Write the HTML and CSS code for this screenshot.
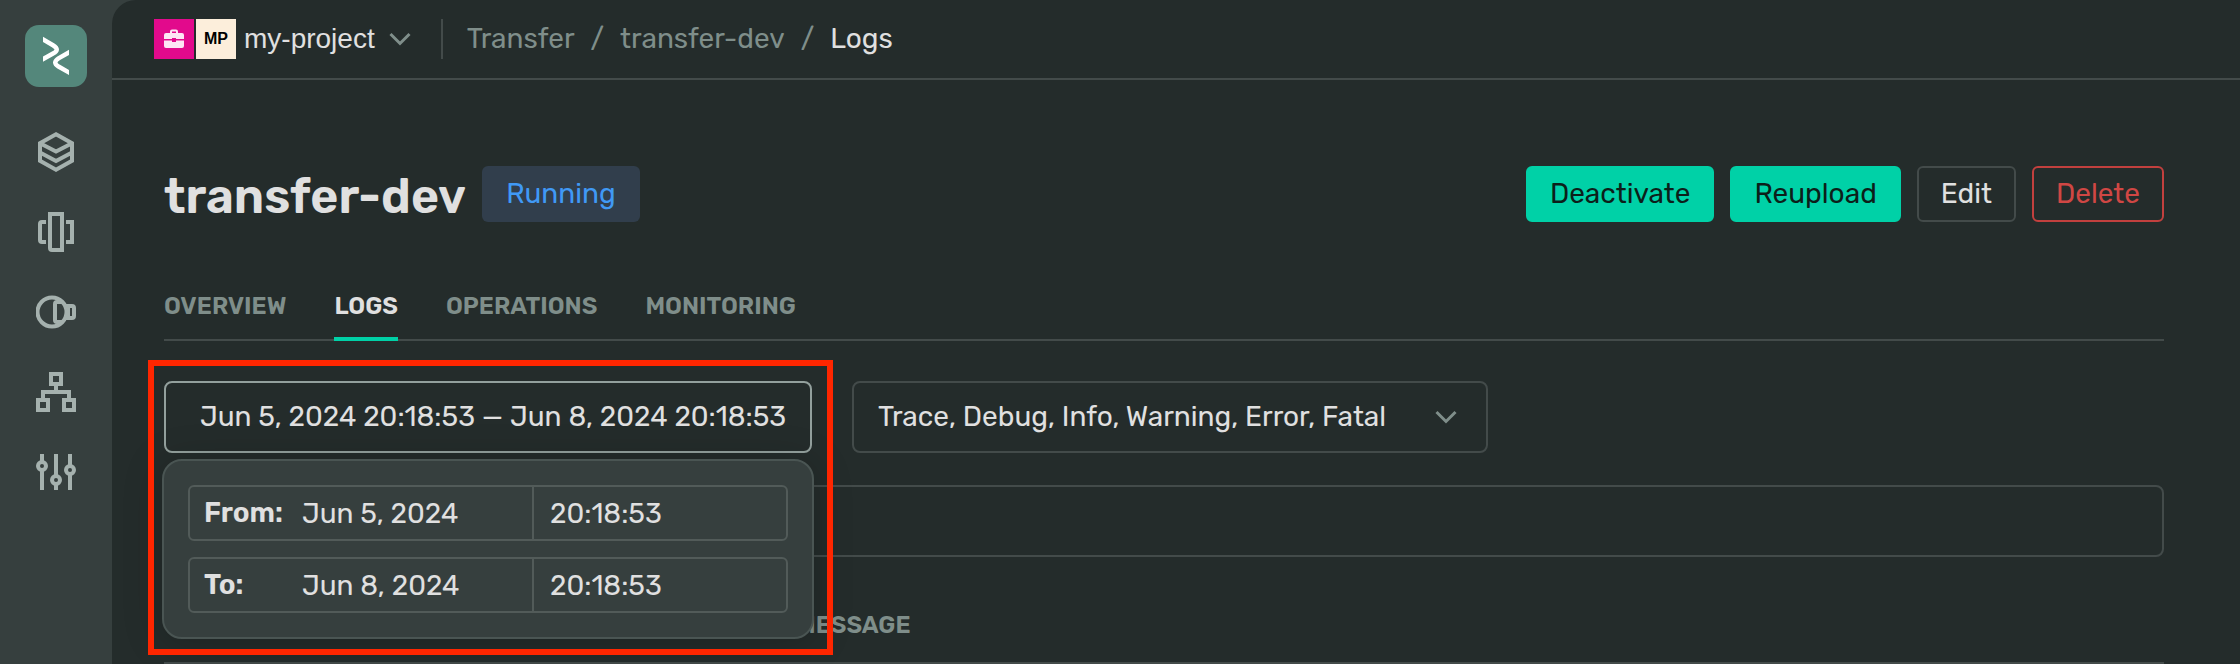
FILE: index.html
```html
<!DOCTYPE html>
<html lang="en">
<head>
<meta charset="utf-8">
<title>transfer-dev – Logs</title>
<link rel="stylesheet" href="styles.css">
</head>
<body>
<div class="app">
  <nav class="sidebar" aria-label="Services">
    <a class="logo" href="#" aria-label="Home">
      <svg width="62" height="62" viewBox="25 25 62 62" fill="none" stroke="#fff" stroke-width="4.500"><clipPath id="mark"><path d="M43 30H69V82H43Z"/></clipPath><path clip-path="url(#mark)" d="M41 38.300L53 45.200Q60.500 49.700 53 53.600L41 60.200M71 51.200L58.500 58.300Q52 62.500 58.500 66.500L71 73.600"/></svg>
    </a>
    <a class="side-link" href="#" aria-label="Clusters">
      <svg width="40" height="40" viewBox="36 132 40 40"><path d="M56 134.300L72 143.200V160.800L56 169.700L40 160.800V143.200ZM40 143.200L56 151.500L72 143.200M40 152.500L56 161L72 152.500"/></svg>
    </a>
    <a class="side-link" href="#" aria-label="Transfer">
      <svg width="40" height="40" viewBox="36 212 40 40"><path d="M50 214H62V250H52Q50 250 50 248ZM46 222H42Q40 222 40 224V240Q40 242 42 242H46M66 222H72V242H66"/></svg>
    </a>
    <a class="side-link" href="#" aria-label="Visualization">
      <svg width="40" height="40" viewBox="36 292 40 40"><circle cx="52" cy="312" r="14.500"/><path d="M62 302H57Q55 302 55 304V320Q55 322 57 322H62M66 306H72Q74 306 74 308V316Q74 318 72 318H66M68 306V318"/></svg>
    </a>
    <a class="side-link" href="#" aria-label="Network">
      <svg width="40" height="40" viewBox="36 372 40 40"><path d="M51 374H61V384H51ZM38 400H48V410H38ZM64 400H74V410H64ZM56 386V392M43 398V392H69V398"/></svg>
    </a>
    <a class="side-link" href="#" aria-label="Settings">
      <svg width="40" height="40" viewBox="36 452 40 40"><path d="M42 454V462M42 470V490M56 454V476M56 484V490M70 454V466M70 474V490"/><circle cx="42" cy="466" r="4"/><circle cx="56" cy="480" r="4"/><circle cx="70" cy="470" r="4"/></svg>
    </a>
  </nav>

  <div class="page">
    <header class="topbar">
      <button class="project" type="button">
        <span class="tile tile-org">
          <svg width="20" height="20" viewBox="0 0 20 20" fill="#fde6f4"><path d="M6 4V2.500Q6 0.500 8 .5H12Q14 .5 14 2.500V4H18Q20 4 20 6V10H12V9H8V10H0V6Q0 4 2 4ZM8 4H12V2.500H8ZM0 11.500H8V13H12V11.500H20V17Q20 19 18 19H2Q0 19 0 17Z"/></svg>
        </span>
        <span class="tile tile-project">MP</span>
        <span class="project-name">my-project</span>
        <svg class="chevron" width="22" height="14" viewBox="0 0 22 14"><path d="M1.500 2L11 11.500L20.500 2"/></svg>
      </button>
      <nav class="crumbs" aria-label="Breadcrumb">
        <a href="#">Transfer</a><span>/</span><a href="#">transfer-dev</a><span>/</span><b>Logs</b>
      </nav>
    </header>

    <main class="content">
      <div class="title-row">
        <h1>transfer-dev</h1>
        <span class="status">Running</span>
        <div class="actions">
          <button class="btn primary" type="button">Deactivate</button>
          <button class="btn primary" type="button">Reupload</button>
          <button class="btn" type="button">Edit</button>
          <button class="btn danger" type="button">Delete</button>
        </div>
      </div>

      <nav class="tabs" aria-label="Sections">
        <a href="#">Overview</a>
        <a class="active" href="#" aria-current="page">Logs</a>
        <a href="#">Operations</a>
        <a href="#">Monitoring</a>
      </nav>

      <div class="filters">
        <div class="range">
          <button class="range-toggle" type="button" aria-expanded="true">Jun 5, 2024 20:18:53 — Jun 8, 2024 20:18:53</button>
          <div class="popup">
            <div class="range-row">
              <label for="from-date">From:</label>
              <input id="from-date" class="date" type="text" value="Jun 5, 2024">
              <input class="time" type="text" value="20:18:53" aria-label="From time">
            </div>
            <div class="range-row">
              <label for="to-date">To:</label>
              <input id="to-date" class="date" type="text" value="Jun 8, 2024">
              <input class="time" type="text" value="20:18:53" aria-label="To time">
            </div>
          </div>
          <div class="highlight"></div>
        </div>
        <div class="levels">
          <select aria-label="Log levels"><option>Trace, Debug, Info, Warning, Error, Fatal</option></select>
          <svg class="chevron" width="22" height="14" viewBox="0 0 22 14"><path d="M1.500 2L11 11.500L20.500 2"/></svg>
        </div>
      </div>

      <input class="search" type="search" aria-label="Search logs">

      <table class="logs">
        <thead><tr><th scope="col">Message</th></tr></thead>
      </table>
    </main>
  </div>
</div>
</body>
</html>
```
FILE: styles.css
```css
* { box-sizing: border-box; }

:root {
  --side: #363f3e;
  --bg: #242c2b;
  --line: #434b4a;
  --muted: #7f8e8a;
  --text: #e0e0e0;
  --accent: #00d1a7;
}

body {
  margin: 0;
  background: var(--side);
  color: var(--text);
  font-family: Rubik, Roboto, sans-serif;
  font-size: 28px;
  line-height: 36px;
}

a { color: inherit; text-decoration: none; }
button, input, select { font: inherit; color: inherit; margin: 0; }
svg { display: block; }

.app { display: flex; min-height: 100vh; }

.sidebar {
  flex: 0 0 112px;
  display: flex;
  flex-direction: column;
  align-items: center;
  gap: 40px;
  padding-top: 25px;
}
.logo {
  margin-bottom: 5px;
  border-radius: 14px;
  background: #54877b;
}
.side-link svg { fill: none; stroke: #a5b1ae; stroke-width: 4; }

.page {
  flex: 1;
  min-width: 0;
  background: var(--bg);
  border-top-left-radius: 24px;
}

.topbar {
  display: flex;
  align-items: center;
  height: 80px;
  padding: 0 42px;
  border-bottom: 2px solid var(--line);
}
.project {
  display: flex;
  align-items: center;
  gap: 2px;
  padding: 0;
  border: 0;
  background: none;
  font-family: "Liberation Sans", Arial, sans-serif;
}
.tile {
  display: grid;
  place-items: center;
  width: 40px;
  height: 40px;
}
.tile-org { background: #e20a8c; }
.tile-project {
  background: #fceedb;
  color: #000;
  font-size: 16px;
  font-weight: 700;
}
.project-name { padding: 0 12px 0 6px; }
.chevron { fill: none; stroke: var(--muted); stroke-width: 3; }

.crumbs {
  display: flex;
  align-items: center;
  gap: 16px;
  height: 40px;
  margin-left: 30px;
  padding-left: 24px;
  border-left: 2px solid var(--line);
  color: var(--muted);
}
.crumbs b { color: var(--text); font-weight: 400; }

.content { padding: 86px 76px 0 52px; }

.title-row { display: flex; align-items: center; gap: 16px; }
h1 { margin: 0; padding-top: 6px; font-size: 48px; line-height: 50px; font-weight: 600; }
.status {
  padding: 10px 24px;
  border-radius: 6px;
  background: #313e4c;
  color: #4099f5;
}
.actions { display: flex; gap: 16px; margin-left: auto; }
.btn {
  padding: 8px 22px;
  border: 2px solid var(--line);
  border-radius: 6px;
  background: none;
}
.btn.primary { border-color: var(--accent); background: var(--accent); color: #0c1f1a; }
.btn.danger { border-color: #c2403e; color: #d04744; }

.tabs {
  display: flex;
  gap: 48px;
  margin-top: 62px;
  border-bottom: 2px solid var(--line);
  color: var(--muted);
  font-size: 24px;
  font-weight: 600;
  line-height: 44px;
  text-transform: uppercase;
}
.tabs a {
  margin-bottom: -2px;
  padding-bottom: 9px;
  border-bottom: 4px solid transparent;
}
.tabs .active { border-color: var(--accent); color: var(--text); }

.filters { display: flex; gap: 40px; margin-top: 40px; }
.range { position: relative; width: 648px; }
.range-toggle {
  display: block;
  width: 100%;
  height: 72px;
  padding: 0 0 0 34px;
  border: 2px solid #93a09d;
  border-radius: 8px;
  background: none;
  text-align: left;
  white-space: nowrap;
}
.popup {
  position: absolute;
  z-index: 1;
  top: 78px;
  left: -2px;
  right: -2px;
  display: grid;
  grid-template-columns: minmax(0, 1fr);
  gap: 16px;
  padding: 24px;
  border: 2px solid #4a5553;
  border-radius: 20px;
  background: var(--side);
  box-shadow: 0 4px 40px rgba(0, 0, 0, .2);
}
.range-row {
  display: flex;
  height: 56px;
  border: 2px solid #525b59;
  border-radius: 6px;
}
.range-row label {
  width: 98px;
  padding-left: 14px;
  font-weight: 600;
  line-height: 52px;
}
.range-row input { min-width: 0; border: 0; background: none; outline: 0; }
.range-row .date { flex: 1; padding: 2px 0 0 14px; }
.range-row .time { width: 254px; padding: 2px 0 0 16px; border-left: 2px solid #525b59; }

.highlight {
  position: absolute;
  z-index: 2;
  inset: -21px -21px -202px -16px;
  border: 6px solid #ff2600;
  pointer-events: none;
}

.levels {
  display: grid;
  align-items: center;
  width: 636px;
}
.levels > * { grid-area: 1 / 1; }
.levels select {
  appearance: none;
  width: 100%;
  height: 72px;
  padding: 0 56px 0 24px;
  border: 2px solid var(--line);
  border-radius: 8px;
  background: none;
}
.levels .chevron { justify-self: end; margin-right: 31px; pointer-events: none; }

.search {
  display: block;
  width: 100%;
  height: 72px;
  margin-top: 32px;
  border: 2px solid var(--line);
  border-radius: 8px;
  background: none;
}

.logs { width: 100%; border-collapse: collapse; }
.logs th {
  padding: 50px 0 19px 632px;
  border-bottom: 2px solid var(--line);
  color: var(--muted);
  font-size: 24px;
  font-weight: 600;
  text-align: left;
  text-transform: uppercase;
}
```
